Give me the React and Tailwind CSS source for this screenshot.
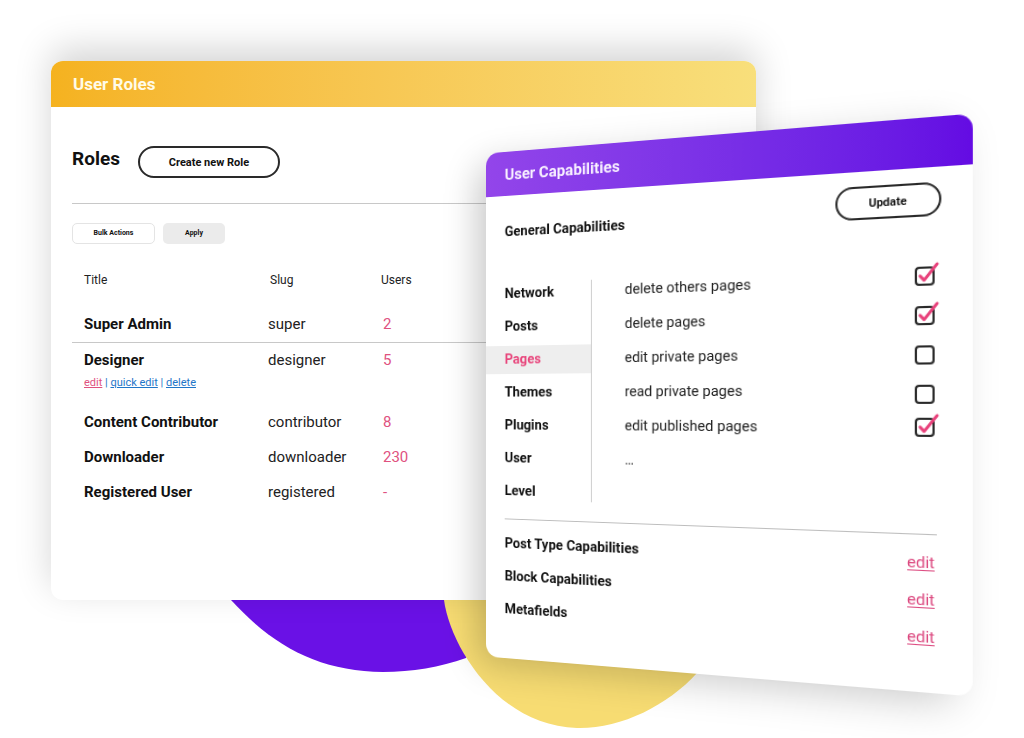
import { useState } from 'react';

const roles = [
  { title: 'Super Admin', slug: 'super', users: '2' },
  { title: 'Designer', slug: 'designer', users: '5', active: true },
  { title: 'Content Contributor', slug: 'contributor', users: '8' },
  { title: 'Downloader', slug: 'downloader', users: '230' },
  { title: 'Registered User', slug: 'registered', users: '-' },
];

const sections = ['Network', 'Posts', 'Pages', 'Themes', 'Plugins', 'User', 'Level'];

const capabilities = [
  { id: 'delete-others', label: 'delete others pages', checked: true },
  { id: 'delete', label: 'delete pages', checked: true },
  { id: 'edit-private', label: 'edit private pages', checked: false },
  { id: 'read-private', label: 'read private pages', checked: false },
  { id: 'edit-published', label: 'edit published pages', checked: true },
];

const otherCapabilities = ['Post Type Capabilities', 'Block Capabilities', 'Metafields'];

function Blobs() {
  return (
    <svg className="absolute left-0 top-0" width="1024" height="738" viewBox="0 0 1024 738" aria-hidden="true">
      <path d="M231 600C275 648 320 671 383 672C412 672 440 667 466 658L520 560H231Z" fill="#6a11e6" />
      <path d="M444 600C450 646 498 726 577 728C620 729 667 706 697 673L730 560H440Z" fill="#f7dc72" />
    </svg>
  );
}

function CapabilityBox({ id, checked, onChange }) {
  return (
    <span className="relative block h-[18px] w-[18px]">
      <input
        id={id}
        type="checkbox"
        checked={checked}
        onChange={onChange}
        className="block h-[18px] w-[18px] appearance-none rounded-[4px] border-2 border-[#2a2a2a] bg-white"
      />
      {checked && (
        <svg className="pointer-events-none absolute -top-1.5 left-0" width="24" height="24" viewBox="0 0 24 24" fill="none" aria-hidden="true">
          <path d="M4.8 14.8L8.4 18.8L20.2 3.9" stroke="#e8407a" strokeWidth="2.8" strokeLinecap="round" strokeLinejoin="round" />
        </svg>
      )}
    </span>
  );
}

function RolesPanel() {
  return (
    <section className="relative ml-[51px] mr-[268px] mt-[61px] self-start rounded-xl bg-white pb-[91px] shadow-[0_-12px_36px_rgba(0,0,0,0.17)] [grid-area:1/1]">
      <header className="flex h-[46px] items-center rounded-t-xl bg-linear-to-r from-[#f5b21f] to-[#f8df7b] px-[22px]">
        <h1 className="text-[17px] font-bold leading-5 text-[#fffbe8]">User Roles</h1>
      </header>

      <div className="px-[21px]">
        <div className="flex items-start gap-[18px] pt-[39px]">
          <h2 className="text-[19px] font-bold leading-[26px]">Roles</h2>
          <button className="h-8 w-[142px] rounded-full border-2 border-[#2a2a2a] pt-0.5 text-[11px] font-bold">Create new Role</button>
        </div>

        <hr className="mt-[25px] border-[#c8c8c8]" />

        <div className="mt-[19px] flex gap-2">
          <button className="h-[21px] w-[83px] rounded-[5px] border border-[#e4e4e4] text-[7px] font-bold">Bulk Actions</button>
          <button className="h-[21px] w-[62px] rounded-[5px] bg-[#ebebeb] text-[7px] font-bold">Apply</button>
        </div>

        <table className="mt-[9px] w-full table-fixed border-collapse text-left text-[15px] leading-5">
          <thead>
            <tr className="h-[54px] text-xs text-[#222]">
              <th className="w-[196px] pl-3 font-normal">Title</th>
              <th className="w-[113px] pl-0.5 font-normal">Slug</th>
              <th className="font-normal">Users</th>
            </tr>
          </thead>
          <tbody>
            {roles.map((role) => (
              <tr key={role.title} className={role.active ? 'h-[62px] border-t border-[#c8c8c8] align-top' : 'h-[35px]'}>
                <td className={role.active ? 'pl-3 pt-[7px]' : 'pl-3'}>
                  <div className="font-bold">{role.title}</div>
                  {role.active && (
                    <div className="mt-[5px] text-[11px] leading-4 text-[#1f76c8]">
                      <a href="#edit" className="text-[#e0527f] underline">edit</a>
                      {' | '}
                      <a href="#quick-edit" className="underline">quick edit</a>
                      {' | '}
                      <a href="#delete" className="underline">delete</a>
                    </div>
                  )}
                </td>
                <td className={role.active ? 'pt-[7px] text-[#222]' : 'text-[#222]'}>{role.slug}</td>
                <td className={role.active ? 'pl-0.5 pt-[7px] text-[#e0527f]' : 'pl-0.5 text-[#e0527f]'}>{role.users}</td>
              </tr>
            ))}
          </tbody>
        </table>
      </div>
    </section>
  );
}

function CapabilitiesPanel() {
  const [checks, setChecks] = useState(capabilities.map((item) => item.checked));

  const toggle = (index) => {
    setChecks(checks.map((value, i) => (i === index ? !value : value)));
  };

  const renderBox = (item, index) => (
    <CapabilityBox key={item.id} id={item.id} checked={checks[index]} onChange={() => toggle(index)} />
  );

  return (
    <section className="relative ml-[463px] mr-16 mt-[135px] self-start rounded-[14px] bg-white pb-[35px] shadow-[-14px_10px_40px_-4px_rgba(0,0,0,0.22)] [grid-area:1/1] [transform:perspective(759px)_rotateY(-13deg)]">
      <header className="flex h-[47px] items-center rounded-t-[14px] bg-linear-to-r from-[#9345ea] to-[#640be3] px-[22px]">
        <h1 className="text-[17px] font-bold leading-5 text-[#f8f0ff]">User Capabilities</h1>
      </header>

      <div className="flex items-end justify-between pl-[22px] pr-7 pt-[14px]">
        <h2 className="text-[15px] font-bold leading-4">General Capabilities</h2>
        <button className="h-8 w-[98px] rounded-full border-2 border-[#2a2a2a] pt-0.5 text-[11px] font-bold">Update</button>
      </div>

      <div className="mt-[41px] flex text-[15px]">
        <nav className="w-[120px]">
          {sections.map((name) => (
            <div key={name} className="flex h-[35px] items-center">
              <a
                href="#section"
                className={
                  name === 'Pages'
                    ? 'flex h-[30px] w-full items-center bg-[#eeeeee] pl-[22px] font-bold text-[#e8467c]'
                    : 'flex h-[30px] w-full items-center pl-[22px] font-bold'
                }
              >
                {name}
              </a>
            </div>
          ))}
        </nav>
        <div className="mb-2 mt-1.5 w-px bg-[#c8c8c8]" />
        <div className="flex flex-1 justify-between pl-9 pr-[34px]">
          <div className="text-[#222]">
            {capabilities.map((item) => (
              <label key={item.id} htmlFor={item.id} className="flex h-[35px] items-center">
                {item.label}
              </label>
            ))}
            <p className="flex h-[35px] items-center">…</p>
          </div>
          <div className="mt-1.5 flex flex-col gap-[13px]">
            <div className="flex flex-col gap-[19px]">{capabilities.slice(0, 4).map(renderBox)}</div>
            {renderBox(capabilities[4], 4)}
          </div>
        </div>
      </div>

      <hr className="ml-[22px] mr-8 mt-3 border-[#bdbdbd]" />

      <ul className="pl-[22px] pr-[34px] pt-2 text-[15px]">
        {otherCapabilities.map((name) => (
          <li key={name} className="flex h-[35px] items-center justify-between">
            <span className="font-bold">{name}</span>
            <a href="#edit" className="pt-0.5 text-[#dc4a80] underline underline-offset-2">edit</a>
          </li>
        ))}
      </ul>
    </section>
  );
}

export default function App() {
  return (
    <main className="relative grid min-h-screen overflow-hidden bg-white font-[Roboto,sans-serif] text-[#111]">
      <Blobs />
      <RolesPanel />
      <CapabilitiesPanel />
    </main>
  );
}
